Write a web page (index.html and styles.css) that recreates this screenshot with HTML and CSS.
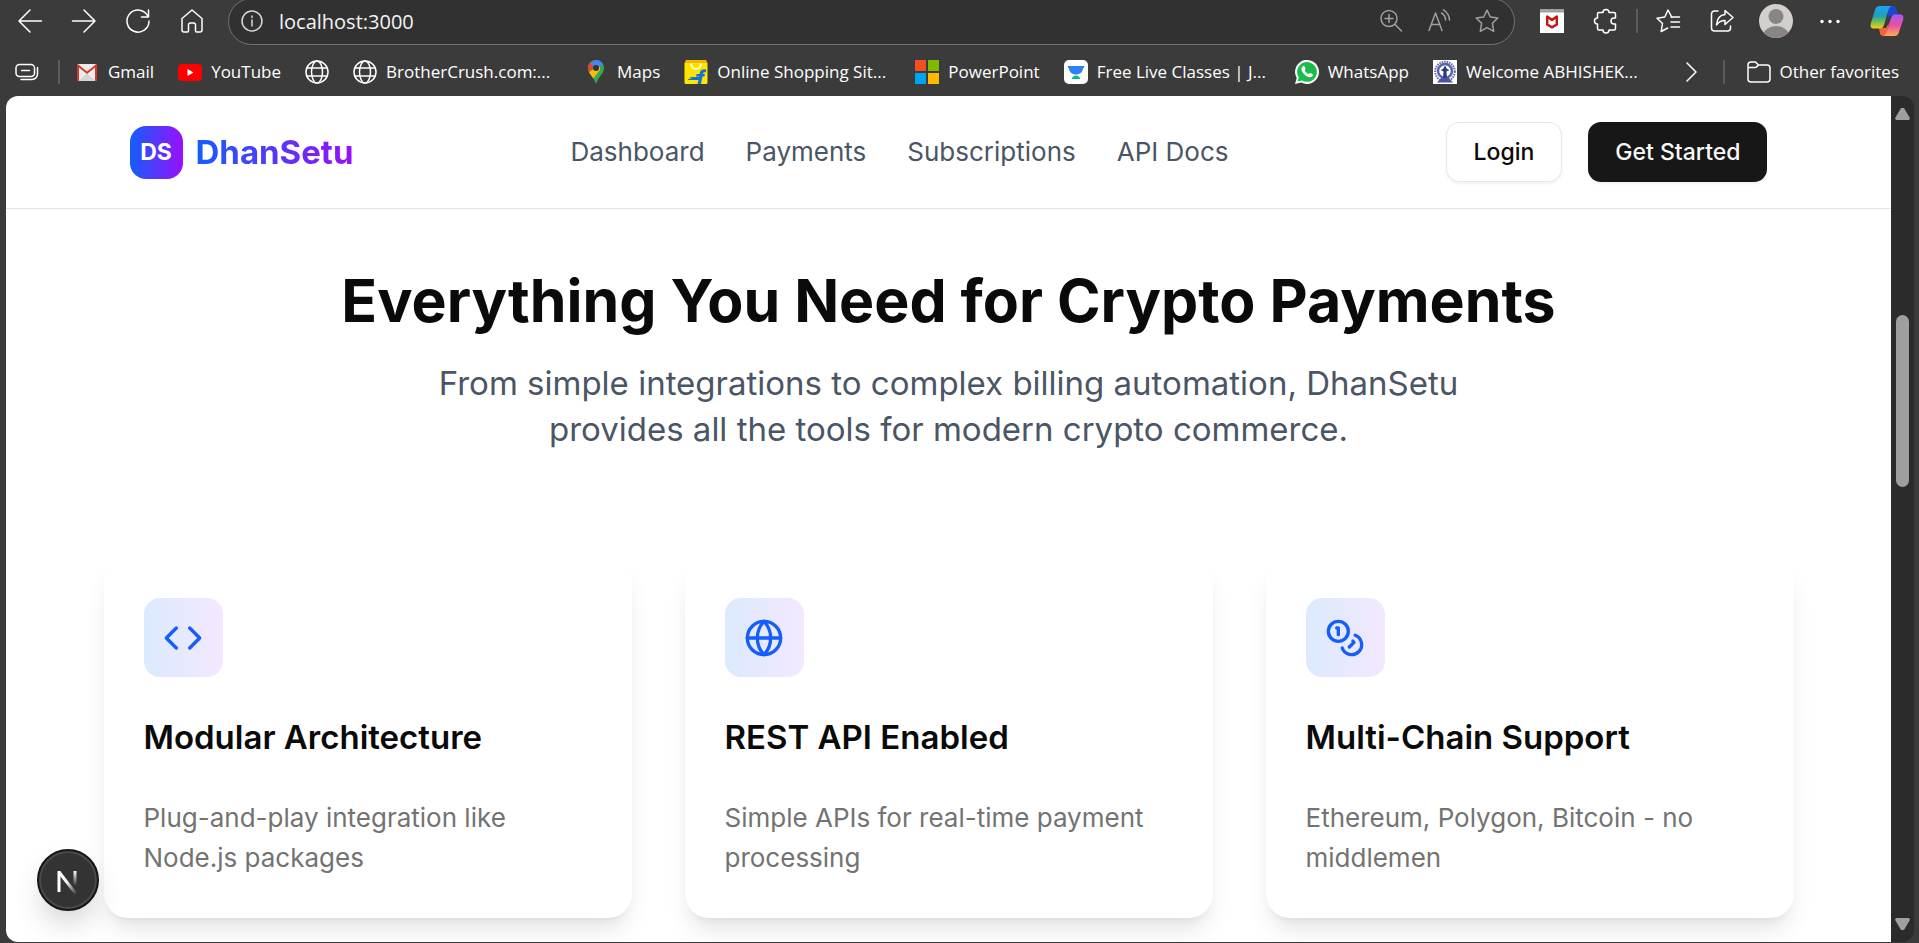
FILE: index.html
```html
<!DOCTYPE html>
<html lang="en">
<head>
<meta charset="utf-8">
<meta name="viewport" content="width=device-width, initial-scale=1">
<title>DhanSetu</title>
<link rel="stylesheet" href="styles.css">
</head>
<body>
<div class="window">
  <div class="toolbar">
    <button class="tool" type="button" aria-label="Back"><svg class="icon24" viewBox="0 0 24 24"><path d="M23.500 12H1M12 1 1 12l11 11"/></svg></button>
    <button class="tool" type="button" aria-label="Forward"><svg class="icon24" viewBox="0 0 24 24"><path d="M.5 12H23M12 1l11 11-11 11"/></svg></button>
    <button class="tool" type="button" aria-label="Reload"><svg class="icon24" viewBox="0 0 24 24"><path d="M22 7.500A11 11 0 1 0 23 12M22.500 1v7H15.500"/></svg></button>
    <button class="tool" type="button" aria-label="Home"><svg class="icon24" viewBox="0 0 24 24"><path d="M12 1 2 9.500V21a2 2 0 0 0 2 2h3.500a1 1 0 0 0 1-1v-6a2 2 0 0 1 2-2h3a2 2 0 0 1 2 2v6a1 1 0 0 0 1 1H20a2 2 0 0 0 2-2V9.500z"/></svg></button>
    <div class="address">
      <svg class="icon24 info" viewBox="0 0 24 24"><circle cx="12" cy="12" r="10"/><path d="M12 11v6M12 7v1.500"/></svg>
      <input class="url" type="text" value="localhost:3000" aria-label="Address">
      <button class="mini" type="button" aria-label="Zoom"><svg class="icon24" viewBox="0 0 24 24"><circle cx="10" cy="9.500" r="8"/><path d="M16 15.500l6.500 6.500M10 5.500v8M6 9.500h8"/></svg></button>
      <button class="mini" type="button" aria-label="Read aloud"><svg class="icon24" viewBox="0 0 24 24"><path d="M2 21.500 8.500 4 15 21.500M4.500 15.500h8M14.500 4a8 8 0 0 1 4 7M16.500 .8a13 13 0 0 1 6 10.200"/></svg></button>
      <button class="mini" type="button" aria-label="Add to favorites"><svg class="icon24" viewBox="0 0 24 24"><path d="M12 1.200 15.300 8l7.500 1-5.400 5.300 1.300 8-6.700-3.600L5.300 22.300l1.300-8L1.200 9l7.500-1z"/></svg></button>
    </div>
    <button class="tool" type="button" aria-label="McAfee"><svg class="icon24" viewBox="0 0 24 24"><path class="solid" fill="#fff" d="M0 0h24v24H0z"/><path class="solid" fill="#a3a0a0" d="M0 0h24v3.500H0z"/><path stroke="#c01818" stroke-width="2.500" d="M7.200 7.500v8l4.800 2.800 4.800-2.800v-8L12 11z"/></svg></button>
    <button class="tool" type="button" aria-label="Extensions"><svg class="icon24" viewBox="0 0 24 24"><path d="M5 3.500h4a3 3 0 0 1 6 0h5a1.500 1.500 0 0 1 1.500 1.500v4h-1.500a3 3 0 0 0 0 6h1.500v4.500a1.500 1.500 0 0 1-1.500 1.500h-5a3 3 0 0 1-6 0H5a1.500 1.500 0 0 1-1.500-1.500V15a3 3 0 0 1 0-6V5A1.500 1.500 0 0 1 5 3.500z"/></svg></button>
    <span class="divider"></span>
    <button class="tool" type="button" aria-label="Favorites"><svg class="icon24" viewBox="0 0 24 24"><path d="M16 8.500 12 1 8.800 8 1 9.200l5.500 5.300L5.200 22.500l6.500-3.500M15 8h8.500M15 13h8.500M15 18h8.500"/></svg></button>
    <button class="tool" type="button" aria-label="Share"><svg class="icon24" viewBox="0 0 24 24"><path d="M8 2H4.500A3 3 0 0 0 1.500 5v14a3 3 0 0 0 3 3h13a3 3 0 0 0 3-3v-2M15 1.500 23 8.500l-8 7V11.500c-4 0-6.500 1.500-8.500 4.500C7 10.500 9.500 6 15 5.500z"/></svg></button>
    <button class="tool" type="button" aria-label="Profile"><svg class="avatar" viewBox="0 0 34 34"><defs><clipPath id="face"><circle cx="17" cy="17" r="17"/></clipPath></defs><g class="solid" clip-path="url(#face)"><path fill="#d2d0ce" d="M0 0h34v34H0z"/><circle cx="17" cy="12.500" r="7.500" fill="#8a8583"/><ellipse cx="17" cy="32" rx="13" ry="10" fill="#8a8583"/></g></svg></button>
    <button class="tool" type="button" aria-label="More"><svg class="icon24" viewBox="0 0 24 24"><g class="solid" fill="#fff"><circle cx="4" cy="12.500" r="1.700"/><circle cx="12" cy="12.500" r="1.700"/><circle cx="20" cy="12.500" r="1.700"/></g></svg></button>
    <button class="tool tool-last" type="button" aria-label="Copilot"><svg class="avatar" viewBox="0 0 34 32">
      <defs>
        <linearGradient id="cpA" x1="0" y1="0" x2="0" y2="1"><stop offset="0" stop-color="#1ba4f5"/><stop offset=".45" stop-color="#1f9fb4"/><stop offset=".7" stop-color="#79bd4f"/><stop offset="1" stop-color="#f4cf0e"/></linearGradient>
        <linearGradient id="cpB" x1="0" y1="0" x2="0" y2="1"><stop offset="0" stop-color="#a557f3"/><stop offset=".5" stop-color="#ea4fa5"/><stop offset="1" stop-color="#ffab55"/></linearGradient>
      </defs>
      <g class="solid"><path fill="#1749d4" d="M18 1h4.500c2 0 3 1 3.500 2.500L28 10h-5c-3 0-4 1-5 4z"/><path fill="#f4633a" d="M9 23h7l3-5-3 13h-2.500c-2 0-3-1-3.500-2.500z"/><path fill="url(#cpA)" d="M10 1h12c-2 .4-3 2-3.700 4.500L14 20c-.8 2.500-2 3.500-4 3.500H4c-3 0-4-2-3.200-5L5 5c.8-3 2.500-4 5-4z"/><path fill="url(#cpB)" d="M24 31H13c2-.4 3-2 3.700-4.500L21 13c.8-2.500 2-3.500 4-3.500h5c3 0 4 2 3.200 5L29 27c-.8 3-2.500 4-5 4z"/></g></svg></button>
  </div>

  <nav class="bookmarks" aria-label="Bookmarks">
    <button class="collections" type="button" aria-label="Workspaces"><svg class="icon24" viewBox="0 0 24 24"><rect x="1" y="4.500" width="18.500" height="12" rx="3.500"/><path d="M6.500 10.500h8M22.500 7.500v6.500a5.500 5.500 0 0 1-5.500 5.500H6"/></svg></button>
    <span class="divider"></span>
    <div class="marks">
      <a class="mark" href="#"><svg class="icon24" viewBox="0 0 24 24"><g class="solid"><rect x="2" y="4" width="20" height="17" rx="2" fill="#ececec"/><path fill="#d6d6d6" d="M4 21l8-8 8 8z"/></g><path stroke="#d9362b" stroke-width="2" d="M3 20.500V5.500L12 12.800 21 5.500v15"/></svg>Gmail</a>
      <a class="mark" href="#"><svg class="icon24" viewBox="0 0 24 24"><g class="solid"><rect x="0" y="4" width="24" height="17" rx="4" fill="#f00"/><path fill="#fff" d="M9.500 9v7l6-3.500z"/></g></svg>YouTube</a>
      <a class="mark" href="#" aria-label="Site"><svg class="icon24" viewBox="0 0 24 24"><circle cx="12" cy="12" r="11"/><ellipse cx="12" cy="12" rx="5.500" ry="11"/><path d="M2 8h20M2 16h20"/></svg></a>
      <a class="mark mark-wide" href="#"><svg class="icon24" viewBox="0 0 24 24"><circle cx="12" cy="12" r="11"/><ellipse cx="12" cy="12" rx="5.500" ry="11"/><path d="M2 8h20M2 16h20"/></svg>BrotherCrush.com:...</a>
      <a class="mark" href="#"><svg class="icon24" viewBox="0 0 24 24"><defs><clipPath id="pin"><path d="M12 24c-1-3-2-4.500-4-7.500C5.500 13.500 4 11 4 8a8 8 0 0 1 16 0c0 3-1.500 5.500-4 8.500-2 3-3 4.500-4 7.500z"/></clipPath></defs><g class="solid" clip-path="url(#pin)"><path fill="#34a853" d="M0 0h24v24H0z"/><path fill="#fbbc04" d="M0 16 16 4v6L8 20z"/><path fill="#ea4335" d="M0 0h10l-1 8-7 7z"/><path fill="#4285f4" d="M6 3 12 0h8v4l-8 5z"/><circle cx="12" cy="8" r="3" fill="#333"/></g></svg>Maps</a>
      <a class="mark mark-wide" href="#"><svg class="icon24" viewBox="0 0 24 24"><g class="solid"><path fill="#ffe500" d="M.5 3h23v19.500a1.500 1.500 0 0 1-1.500 1.500H2a1.500 1.500 0 0 1-1.500-1.500z"/><path fill="#f5b800" d="M2 0h20l1.500 3H.5z"/><path fill="#1072d6" d="M22 9.500v3c-2-.4-2.800 0-3 1.500h2l-.6 2.500h-2L17 24h-3.500l1-4H3.500l2-1.500H8L5.500 17h9.500l.2-.5H12l.6-2.500h3c.4-3.500 2.400-5.200 6.400-4.500z"/></g><path stroke="#fff" d="M7 4a5 5 0 0 0 10 0"/></svg>Online Shopping Sit...</a>
      <a class="mark" href="#"><svg class="icon24" viewBox="0 0 24 24"><g class="solid"><path fill="#f25022" d="M0 0h11v11H0z"/><path fill="#7fba00" d="M13 0h11v11H13z"/><path fill="#00a4ef" d="M0 13h11v11H0z"/><path fill="#ffb900" d="M13 13h11v11H13z"/></g></svg>PowerPoint</a>
      <a class="mark mark-wide" href="#"><svg class="icon24" viewBox="0 0 24 24"><g class="solid"><rect width="24" height="24" rx="5" fill="#fff"/><path fill="#2d81f7" d="M4 6h16v2h-1c0 4-3 6.500-7 6.500S5 12 5 8H4z"/><path fill="#08bd80" d="M12 15.500c2 0 3.200 1 3.200 2H16v1.500H8v-1.500h.8c0-1 1.200-2 3.200-2z"/></g></svg>Free Live Classes | J...</a>
      <a class="mark" href="#"><svg class="icon24" viewBox="0 0 24 24"><g class="solid"><path fill="#fff" d="M0 24l1.700-6A12 12 0 1 1 6.200 22.400z"/><path fill="#18bd4b" d="M2.500 21.500l1.300-4A9.900 9.900 0 1 1 7 20.500z"/><path fill="#fff" d="M7.500 6.500c1-1 1.800-.8 2.200.2l.8 2c.2.700-1 1.300-.8 1.900.8 1.600 2 2.700 3.700 3.400.7.300 1.200-1.300 1.900-1.100l2 1c.9.500.8 1.400 0 2.300-1.300 1.400-3.300 1.300-5.500.1-2.200-1.100-4-3-4.900-5.200C6.200 9.200 6.400 7.600 7.500 6.500z"/></g></svg>WhatsApp</a>
      <a class="mark mark-wide" href="#"><svg class="icon24" viewBox="0 0 24 24"><path class="solid" fill="#fff" d="M0 0h24v24H0z"/><circle cx="12" cy="11.500" r="9.800" stroke="#5a63a8" stroke-width="2" stroke-linecap="butt" stroke-dasharray="1.500 1"/><circle cx="12" cy="11" r="7" stroke="#5a63a8" stroke-width="2.500"/><path class="solid" fill="#2c3788" d="M12 5.500l2 3.500 2.500 1-3 1.500.5 7h-4l.5-7-3-1.500L10 9z"/><path class="solid" fill="#4b559f" d="M4 22.500 8 18h8l4 4.500z"/></svg>Welcome ABHISHEK...</a>
    </div>
    <button class="more" type="button" aria-label="More bookmarks"><svg class="icon24" viewBox="0 0 24 24"><path d="M9 3l9 9-9 9"/></svg></button>
    <span class="divider"></span>
    <a class="mark other" href="#"><svg class="icon24" viewBox="0 0 24 24"><path d="M1 19V5a3 3 0 0 1 3-3h4.500l3 3H20a3 3 0 0 1 3 3v11a3 3 0 0 1-3 3H4a3 3 0 0 1-3-3zM1.500 7.500H8a2 2 0 0 0 1.500-.6L11.500 5"/></svg>Other favorites</a>
  </nav>

  <div class="viewport">
    <div class="page">
      <header class="site-header">
        <div class="container header-inner">
          <a class="brand" href="#"><span class="brand-mark">DS</span><span class="brand-name">DhanSetu</span></a>
          <nav class="site-nav" aria-label="Main">
            <a href="#">Dashboard</a><a href="#">Payments</a><a href="#">Subscriptions</a><a href="#">API Docs</a>
          </nav>
          <div class="actions">
            <button class="btn btn-outline" type="button">Login</button>
            <button class="btn btn-dark" type="button">Get Started</button>
          </div>
        </div>
      </header>
      <main class="container features">
        <div class="intro">
          <h1>Everything You Need for Crypto Payments</h1>
          <p>From simple integrations to complex billing automation, DhanSetu provides all the tools for modern crypto commerce.</p>
        </div>
        <div class="cards">
          <article class="card">
            <span class="card-icon"><svg viewBox="0 0 24 24"><path d="m16 18 6-6-6-6M8 6l-6 6 6 6"/></svg></span>
            <h2>Modular Architecture</h2>
            <p>Plug-and-play integration like Node.js packages</p>
          </article>
          <article class="card">
            <span class="card-icon"><svg viewBox="0 0 24 24"><circle cx="12" cy="12" r="10"/><path d="M12 2a14.500 14.500 0 0 0 0 20 14.500 14.500 0 0 0 0-20M2 12h20"/></svg></span>
            <h2>REST API Enabled</h2>
            <p>Simple APIs for real-time payment processing</p>
          </article>
          <article class="card">
            <span class="card-icon"><svg viewBox="0 0 24 24"><circle cx="8" cy="8" r="6"/><path d="M18.090 10.370A6 6 0 1 1 10.340 18M7 6h1v4M16.710 13.880l.7.710-2.820 2.820"/></svg></span>
            <h2>Multi-Chain Support</h2>
            <p>Ethereum, Polygon, Bitcoin - no middlemen</p>
          </article>
        </div>
      </main>
      <button class="dev-badge" type="button" aria-label="Open Next.js Dev Tools"><svg viewBox="0 0 40 40"><defs><linearGradient id="nA" gradientUnits="userSpaceOnUse" x1="20" y1="20" x2="30" y2="33"><stop offset="0" stop-color="#fff"/><stop offset="1" stop-color="#fff" stop-opacity="0"/></linearGradient><linearGradient id="nB" gradientUnits="userSpaceOnUse" x1="0" y1="11" x2="0" y2="26"><stop offset="0" stop-color="#fff"/><stop offset="1" stop-color="#fff" stop-opacity="0"/></linearGradient></defs><path stroke="#fff" d="M11 32V11"/><path stroke="url(#nA)" d="M11 12 28 34"/><path stroke="url(#nB)" d="M27 11v16"/></svg></button>
    </div>
    <div class="scrollbar" aria-hidden="true">
      <span class="arrow arrow-up"></span>
      <span class="space-before"></span><span class="thumb"></span><span class="space-after"></span>
      <span class="arrow arrow-down"></span>
    </div>
  </div>
</div>
</body>
</html>
```
FILE: styles.css
```css
* { box-sizing: border-box; }

body {
  margin: 0;
  background: #3b3b3b;
  font-family: Inter, sans-serif;
}

button {
  margin: 0;
  padding: 0;
  border: 0;
  background: none;
  font: inherit;
  color: inherit;
}

a { color: inherit; text-decoration: none; }
h1, h2, p { margin: 0; }

.window {
  display: flex;
  flex-direction: column;
  height: 100vh;
  overflow: hidden;
}

/* Browser toolbar */
.toolbar {
  display: flex;
  align-items: center;
  height: 46px;
  margin-top: -2px;
  padding: 0 5px 0 3px;
  flex: none;
}

.tool {
  display: grid;
  place-items: center;
  flex: none;
  width: 54px;
  height: 46px;
}

.tool-last { margin-left: 3px; }

.icon24 {
  flex: none;
  width: 24px;
  height: 24px;
  overflow: visible;
  fill: none;
  stroke: #fff;
  stroke-width: 1.5;
  stroke-linejoin: round;
  stroke-linecap: round;
}

.solid { stroke: none; }
.avatar { width: 34px; height: 34px; }

.address {
  display: flex;
  align-items: center;
  flex: 1;
  height: 47px;
  margin: 0 10px 0 9px;
  padding: 0 3px 0 11px;
  border: 1px solid #737373;
  border-radius: 24px;
  background: #313131;
}

.address .icon24 { stroke: #a0a0a0; }
.address .info { stroke: #d8d8d8; }

.url {
  flex: 1;
  min-width: 0;
  padding: 0 0 0 15px;
  border: 0;
  background: none;
  color: #f4f4f4;
  font: 20px "Open Sans", sans-serif;
}

.mini {
  display: grid;
  place-items: center;
  width: 48px;
  height: 40px;
}

.divider {
  flex: none;
  width: 2px;
  height: 24px;
  margin: 0 3px;
  background: #5c5c5c;
}

/* Bookmarks bar */
.bookmarks {
  display: flex;
  align-items: center;
  flex: none;
  height: 52px;
  padding: 4px 20px 0 15px;
  color: #fff;
  font: 17px/24px "Open Sans", sans-serif;
  white-space: nowrap;
}

.collections { height: 24px; margin-right: 16px; }
.marks { display: flex; flex: 1; gap: 24px; min-width: 0; margin-left: 12px; }
.mark { display: flex; align-items: center; gap: 9px; }
.mark-wide { flex: none; width: 207px; }
.more { height: 24px; margin-right: 18px; }
.other { margin-left: 19px; }

/* Page area */
.viewport {
  display: flex;
  flex: 1;
  min-height: 0;
  margin: 0 5px 1px 6px;
}

.page {
  position: relative;
  flex: 1;
  overflow: hidden;
  border-radius: 12px 0 0 12px;
  background: #fff;
  color: #0a0a0a;
}

.container {
  max-width: 1690px;
  margin: 0 auto;
}

.site-header { border-bottom: 1px solid #e5e5e5; }

.header-inner {
  display: flex;
  align-items: center;
  justify-content: space-between;
  padding: 26px;
}

.brand { display: flex; align-items: center; gap: 13px; }

.brand-mark {
  display: grid;
  place-items: center;
  width: 53px;
  height: 53px;
  border-radius: 16px;
  background: linear-gradient(90deg, #155dfc, #9810fa);
  color: #fff;
  font-size: 23px;
  font-weight: 700;
}

.brand-name {
  background: linear-gradient(90deg, #155dfc, #9810fa);
  background-clip: text;
  -webkit-background-clip: text;
  color: transparent;
  font-size: 33px;
  line-height: 46px;
  font-weight: 700;
}

.site-nav {
  display: flex;
  gap: 41px;
  color: #4a5565;
  font-size: 26px;
  line-height: 40px;
}

.actions { display: flex; gap: 26px; }

.btn {
  height: 60px;
  padding: 0 27px;
  border-radius: 13px;
  box-shadow: 0 2px 3px rgba(0, 0, 0, .05);
  font-size: 23px;
  font-weight: 500;
}

.btn-outline { border: 1px solid #e5e5e5; background: #fff; }
.btn-dark { background: #171717; color: #fafafa; }

.features { padding-top: 59px; }

.intro {
  max-width: 1267px;
  margin: 0 auto 106px;
  text-align: center;
}

.intro h1 {
  font-size: 59px;
  line-height: 66px;
  font-weight: 700;
}

.intro p {
  max-width: 1109px;
  margin: 26px auto 0;
  color: #4a5565;
  font-size: 33px;
  line-height: 46px;
}

.cards {
  display: grid;
  grid-template-columns: repeat(3, 1fr);
  gap: 53px;
}

.card {
  padding: 40px;
  border-radius: 24px;
  background: #fff;
  box-shadow: 0 17px 25px -5px rgba(0, 0, 0, .1), 0 7px 10px -7px rgba(0, 0, 0, .1);
}

.card-icon {
  display: grid;
  place-items: center;
  width: 79px;
  height: 79px;
  border-radius: 16px;
  background: linear-gradient(90deg, #dbeafe, #f3e8ff);
}

.card-icon svg {
  width: 40px;
  height: 40px;
  fill: none;
  stroke: #155dfc;
  stroke-width: 2;
  stroke-linecap: round;
  stroke-linejoin: round;
}

.card h2 {
  margin: 37px 0 38px;
  font-size: 33px;
  line-height: 46px;
  font-weight: 600;
}

.card p {
  color: #737373;
  font-size: 26px;
  line-height: 40px;
}

.dev-badge {
  position: absolute;
  left: 31px;
  bottom: 31px;
  width: 62px;
  height: 62px;
  border: 2px solid #171717;
  border-radius: 50%;
  background: #333;
  box-shadow: inset 0 0 0 2px #4a4a4a, 0 16px 32px -8px rgba(0, 0, 0, .24);
}

.dev-badge svg {
  display: block;
  width: 40px;
  height: 40px;
  margin: 0 auto;
  fill: none;
  stroke-width: 3;
}

/* Scrollbar */
.scrollbar {
  display: flex;
  flex-direction: column;
  align-items: center;
  flex: none;
  width: 23px;
  padding: 12px 0;
  border-radius: 0 12px 12px 0;
  background: #2b2b2b;
}

.arrow { width: 15px; height: 12px; background: #9f9f9f; }
.arrow-up { clip-path: polygon(40% 0, 60% 0, 100% 85%, 93% 100%, 7% 100%, 0 85%); }
.arrow-down { clip-path: polygon(40% 100%, 60% 100%, 100% 15%, 93% 0, 7% 0, 0 15%); }
.space-before { flex: 195; }
.space-after { flex: 431; }
.thumb { flex: 172; width: 13px; border-radius: 7px; background: #9f9f9f; }
```
